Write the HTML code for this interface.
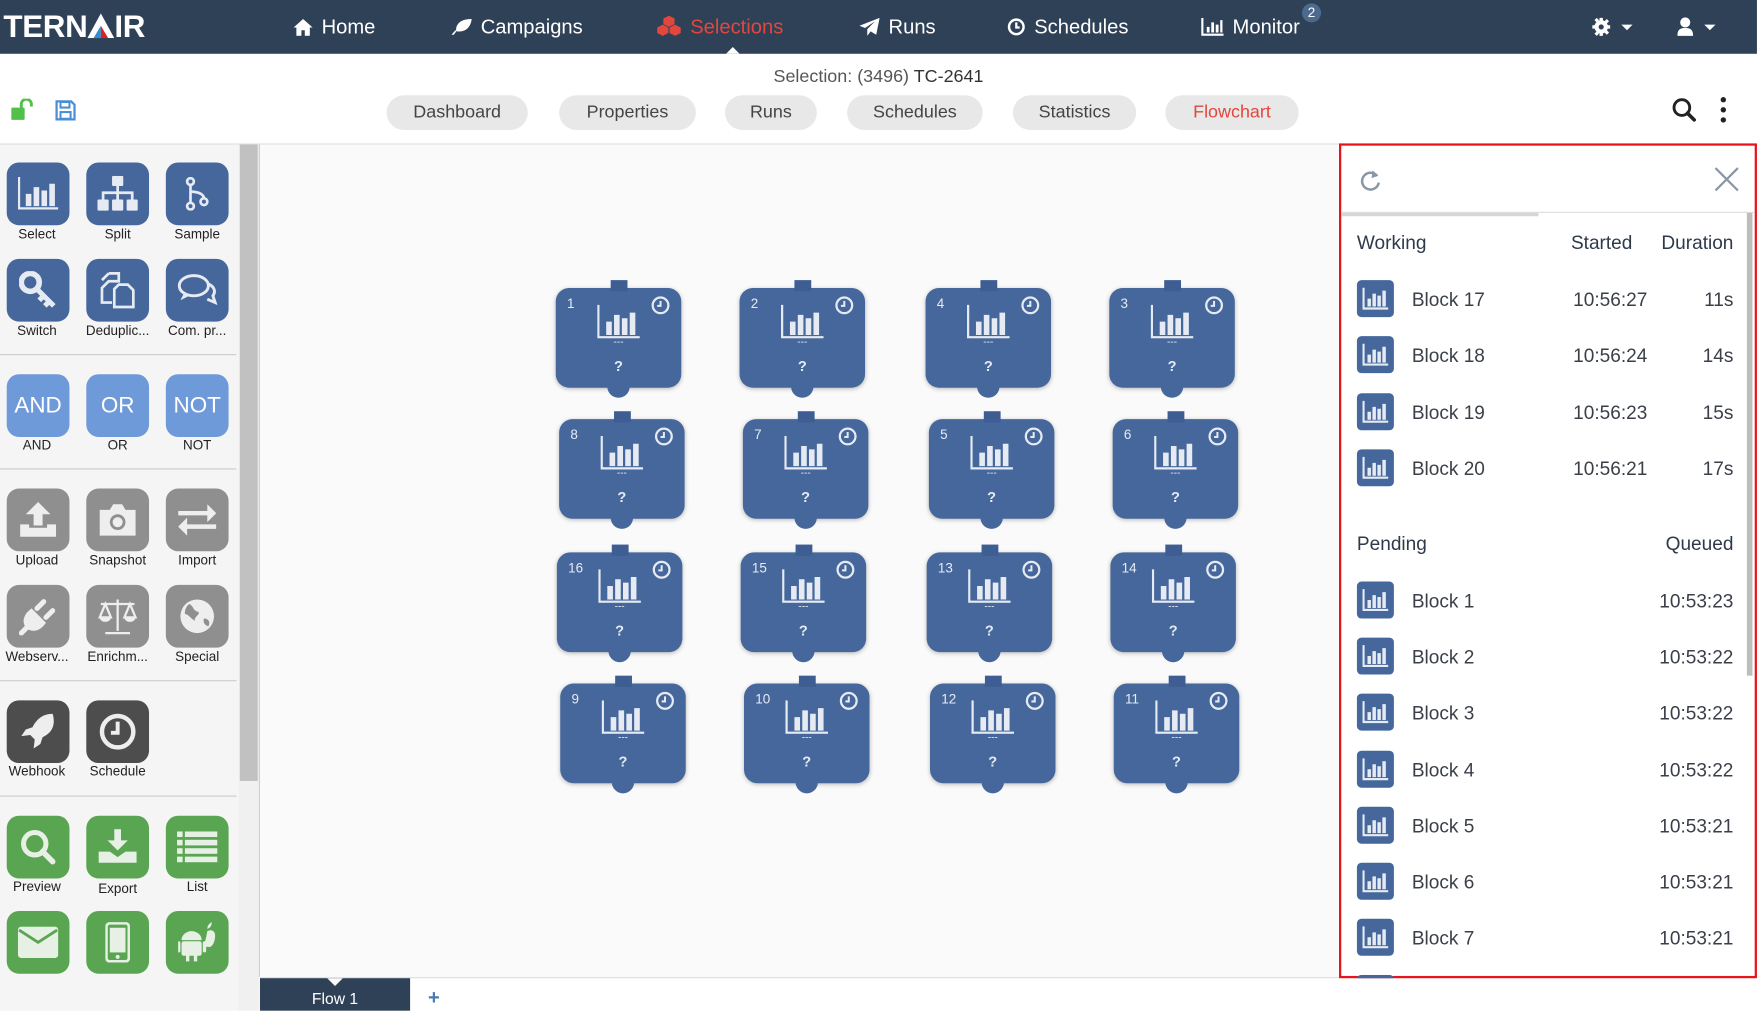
<!DOCTYPE html>
<html><head><meta charset="utf-8"><style>
*{margin:0;padding:0;box-sizing:border-box}
html,body{width:1757px;height:1010px;overflow:hidden;background:#fff}
#s{position:absolute;left:0;top:0;width:1568px;height:902px;transform:scale(1.1205);transform-origin:0 0;font-family:"Liberation Sans",sans-serif}
.a{position:absolute}
.nav{left:0;top:0;width:1568px;height:48px;background:#2f4156}
.ni{position:absolute;top:14px;font-size:18px;color:#fff;white-space:nowrap}
.ni svg{vertical-align:-2px;margin-right:8px}
.tabp{position:absolute;top:85px;height:31px;border-radius:16px;background:#e8e8e8;color:#444;font-size:16px;line-height:32px;text-align:center}
.side{left:0;top:129px;width:213px;height:773px;background:#f5f5f5}
.t{position:absolute;width:56px;height:56px;border-radius:11px;display:flex;align-items:center;justify-content:center;color:#fff}
.lb{position:absolute;width:72px;text-align:center;font-size:12px;color:#222;white-space:nowrap}
.sep{position:absolute;left:0;width:211px;height:1px;background:#ccc}
.B{background:#46679c}.L{background:#6f9ad9;font-size:20px}.G{background:#8f8f8f}.D{background:#4d4d4d}.Gr{background:#5aa552}
.blk{position:absolute;width:112px;height:89px;background:#46679c;border-radius:12px;box-shadow:0 1px 4px rgba(0,0,0,.25);color:#e6ebf3}
.blk .tb{position:absolute;left:49px;top:-7px;width:15px;height:10px;background:#3e5d92}
.blk .dt{position:absolute;left:46px;bottom:-9px;width:20px;height:20px;border-radius:50%;background:#46679c}
.blk .n{position:absolute;left:10px;top:7px;font-size:12px}
.blk .ck{position:absolute;right:10px;top:7px}
.blk .ch{position:absolute;left:37px;top:15px}
.blk .d{position:absolute;left:0;width:100%;text-align:center;top:43px;font-size:9px}
.blk .q{position:absolute;left:0;width:100%;text-align:center;top:62px;font-size:13px;font-weight:bold}
.pn{left:1195px;top:128px;width:373px;height:745px;border:2px solid #e8141c;background:#fff}
.row{position:absolute;left:14px;width:336px;height:34px;font-size:17px;color:#3a3f48}
.row .ib{position:absolute;left:0;top:0;width:33px;height:33px;border-radius:4px;background:#45679c}
.row .nm{position:absolute;left:49px;top:8px}
.row .st{position:absolute;left:193px;top:8px}
.row .du{position:absolute;right:0;top:8px}
</style></head><body><div id="s">
<div class="a nav"></div>
<div class="a" style="left:3px;top:8px;font-size:28px;font-weight:bold;color:#fff;letter-spacing:-.3px;white-space:nowrap">TERN<span style="display:inline-block;width:24px;height:22px;position:relative;vertical-align:-1px"><svg style="position:absolute;left:0;top:0" width="24" height="22" viewBox="0 0 22 24" preserveAspectRatio="none"><path d="M11 0L0 24h22z" fill="#fff"/><path d="M11 12L5 24h6z" fill="#2e8fd4"/><path d="M11 12L17 24h-6z" fill="#d8232a"/></svg></span>IR</div>
<div class="ni" style="left:262px"><svg width="17" height="15" viewBox="0 0 17 15"><path d="M8.5 0L0 7.5h2.5V15h4.5v-5h3v5h4.5V7.5H17z" fill="#fff"/></svg>Home</div>
<div class="ni" style="left:402px"><svg width="19" height="16" viewBox="0 0 19 16"><path d="M1 15C4 11 8 8 13 6 8 9 5 12 3 15zM5 10C6 3 12 1 19 1 18 8 14 13 6 12z" fill="#fff"/></svg>Campaigns</div>
<div class="ni" style="left:586px;color:#e1473c"><svg width="22" height="18" viewBox="0 0 22 18"><g fill="#e1473c"><path d="M11 0l5 2.5v5L11 10 6 7.5v-5z"/><path d="M5.5 8l5 2.5v5L5.5 18 .5 15.5v-5z"/><path d="M16.5 8l5 2.5v5L16.5 18l-5-2.5v-5z"/></g></svg>Selections</div>
<div class="a" style="left:648px;top:42px;border:6px solid transparent;border-bottom-color:#fff;border-top:0"></div>
<div class="ni" style="left:767px"><svg width="18" height="16" viewBox="0 0 18 16"><path d="M18 0L0 7l5 2 9-6-7 7v6l3-4 5 3z" fill="#fff"/></svg>Runs</div>
<div class="ni" style="left:899px"><svg width="16" height="16" viewBox="0 0 16 16"><circle cx="8" cy="8" r="6.5" fill="none" stroke="#fff" stroke-width="2.2"/><path d="M8 4v4.5h3" fill="none" stroke="#fff" stroke-width="2"/></svg>Schedules</div>
<div class="ni" style="left:1072px"><svg width="20" height="16" viewBox="0 0 20 16"><path d="M1 0v15h19" fill="none" stroke="#fff" stroke-width="2"/><path d="M5 8h2.5v5H5zM9 4h2.5v9H9zM13 6h2.5v7H13zM17 2h2v11h-2z" fill="#fff"/></svg>Monitor</div>
<div class="a" style="left:1162px;top:3px;width:17px;height:17px;border-radius:50%;background:#4c6a8e;color:#fff;font-size:12px;text-align:center;line-height:17px">2</div>
<div class="a" style="left:1421px;top:15px"><svg width="40" height="18" viewBox="0 0 40 18"><g fill="#fff"><circle cx="8" cy="9" r="6"/><path d="M6.5 1h3v3h-3zM6.5 14h3v3h-3zM0 7.5h3v3H0zM13 7.5h3v3h-3zM2 3l2-2 2 2-2 2zM11 14l2-2 2 2-2 2zM2 15l2-2 2 2-2 2zM11 4l2-2 2 2-2 2z"/><path d="M26 7h10l-5 5z"/></g><circle cx="8" cy="9" r="2.3" fill="#2f4156"/></svg></div>
<div class="a" style="left:1497px;top:15px"><svg width="36" height="18" viewBox="0 0 36 18"><g fill="#fff"><circle cx="7" cy="5" r="4.5"/><path d="M0 17c0-6 3-7 7-7s7 1 7 7z"/><path d="M24 7h10l-5 5z"/></g></svg></div>
<div class="a" style="left:0;top:60px;width:1568px;text-align:center;font-size:16px;color:#555">Selection: (3496) <span style="color:#333">TC-2641</span></div>
<div class="a" style="left:10px;top:88px"><svg width="22" height="20" viewBox="0 0 22 20"><rect x="0" y="8" width="12" height="11" rx="1" fill="#52c04a"/><path d="M9 9V5a4.5 4.5 0 019 0v2" fill="none" stroke="#52c04a" stroke-width="2.6"/></svg></div>
<div class="a" style="left:49px;top:89px"><svg width="19" height="19" viewBox="0 0 19 19"><path d="M1.5 1.5h13l3 3v13h-16z" fill="none" stroke="#4a8fd6" stroke-width="2"/><path d="M5 2h8v5H5z" fill="none" stroke="#4a8fd6" stroke-width="1.8"/><rect x="5" y="11" width="9" height="6" fill="none" stroke="#4a8fd6" stroke-width="1.8"/></svg></div>
<div class="tabp" style="left:345px;width:126px">Dashboard</div>
<div class="tabp" style="left:499px;width:122px">Properties</div>
<div class="tabp" style="left:647px;width:82px">Runs</div>
<div class="tabp" style="left:756px;width:121px">Schedules</div>
<div class="tabp" style="left:904px;width:110px">Statistics</div>
<div class="tabp" style="left:1040px;width:119px;color:#e1473c">Flowchart</div>
<div class="a" style="left:1492px;top:87px"><svg width="22" height="22" viewBox="0 0 22 22"><circle cx="9" cy="9" r="7" fill="none" stroke="#222" stroke-width="2.6"/><path d="M14 14l6 6" stroke="#222" stroke-width="3.2" stroke-linecap="round"/></svg></div>
<div class="a" style="left:1535px;top:86px"><svg width="6" height="24" viewBox="0 0 6 24"><circle cx="3" cy="3" r="2.4" fill="#222"/><circle cx="3" cy="12" r="2.4" fill="#222"/><circle cx="3" cy="21" r="2.4" fill="#222"/></svg></div>
<div class="a" style="left:0;top:128px;width:1568px;height:1px;background:#ddd"></div>
<div class="a side"></div>
<div class="a" style="left:213px;top:129px;width:18px;height:773px;background:#f0f0f0"></div>
<div class="a" style="left:214px;top:129px;width:16px;height:568px;background:#c1c1c1"></div>
<div class="a" style="left:231px;top:129px;width:1px;height:743px;background:#ccc"></div>
<div class="a" style="left:232px;top:129px;width:963px;height:743px;background:#fafafa"></div>
<div class="t B" style="left:6px;top:145px"><svg width="36" height="30" viewBox="0 0 36 30"><path d="M1 0v28h35" fill="none" stroke="#e6ebf3" stroke-width="2"/><path d="M7 15h5v11H7zM14 9h5v17h-5zM21 12h5v14h-5zM28 6h5v20h-5z" fill="#e6ebf3"/></svg></div><div class="lb" style="left:-3px;top:202px">Select</div>
<div class="t B" style="left:77px;top:145px"><svg width="36" height="32" viewBox="0 0 36 32"><g fill="#e6ebf3"><rect x="13" y="0" width="10" height="9" rx="1"/><rect x="0" y="21" width="10" height="10" rx="1"/><rect x="13" y="21" width="10" height="10" rx="1"/><rect x="26" y="21" width="10" height="10" rx="1"/></g><path d="M18 9v12M5 21v-6h26v6" fill="none" stroke="#e6ebf3" stroke-width="2.4"/></svg></div><div class="lb" style="left:69px;top:202px">Split</div>
<div class="t B" style="left:148px;top:145px"><svg width="22" height="30" viewBox="0 0 22 30"><g fill="none" stroke="#e6ebf3" stroke-width="2.4"><circle cx="5" cy="4" r="3"/><circle cx="5" cy="26" r="3"/><circle cx="17" cy="22" r="3"/><path d="M5 7v16M5 13c8 0 12 3 12 6"/></g></svg></div><div class="lb" style="left:140px;top:202px">Sample</div>
<div class="t B" style="left:6px;top:231px"><svg width="34" height="34" viewBox="0 0 34 34"><circle cx="10" cy="10" r="8" fill="none" stroke="#e6ebf3" stroke-width="5"/><path d="M15 15l16 16M22 22l-4 4M27 27l-4 4" stroke="#e6ebf3" stroke-width="4.5"/></svg></div><div class="lb" style="left:-3px;top:288px">Switch</div>
<div class="t B" style="left:77px;top:231px"><svg width="32" height="34" viewBox="0 0 32 34"><path d="M8 2h9v7h-9l-6 6v13h9M8 2L2 8v0" fill="none" stroke="#e6ebf3" stroke-width="2.4"/><path d="M17 12h8l5 5v15H13V16z" fill="none" stroke="#e6ebf3" stroke-width="2.4"/></svg></div><div class="lb" style="left:69px;top:288px">Deduplic...</div>
<div class="t B" style="left:148px;top:231px"><svg width="36" height="30" viewBox="0 0 36 30"><ellipse cx="15" cy="11" rx="13" ry="9" fill="none" stroke="#e6ebf3" stroke-width="2.6"/><path d="M6 18l-3 6 8-4" fill="#e6ebf3"/><path d="M27 9c6 2 8 7 5 11l2 6-7-3" fill="none" stroke="#e6ebf3" stroke-width="2.6"/></svg></div><div class="lb" style="left:140px;top:288px">Com. pr...</div>
<div class="sep" style="top:316px"></div>
<div class="t L" style="left:6px;top:334px">AND</div><div class="lb" style="left:-3px;top:390px">AND</div>
<div class="t L" style="left:77px;top:334px">OR</div><div class="lb" style="left:69px;top:390px">OR</div>
<div class="t L" style="left:148px;top:334px">NOT</div><div class="lb" style="left:140px;top:390px">NOT</div>
<div class="sep" style="top:418px"></div>
<div class="t G" style="left:6px;top:436px"><svg width="36" height="32" viewBox="0 0 36 32"><g fill="#eee"><path d="M18 0L7 11h7v10h8V11h7z"/><path d="M2 20h8v3h16v-3h8v11H2z"/></g></svg></div><div class="lb" style="left:-3px;top:493px">Upload</div>
<div class="t G" style="left:77px;top:436px"><svg width="36" height="30" viewBox="0 0 36 30"><path d="M2 6h9l3-5h8l3 5h9v23H2z" fill="#eee"/><circle cx="18" cy="17" r="7" fill="#8f8f8f"/><circle cx="18" cy="17" r="4.5" fill="#eee"/></svg></div><div class="lb" style="left:69px;top:493px">Snapshot</div>
<div class="t G" style="left:148px;top:436px"><svg width="34" height="28" viewBox="0 0 34 28"><g fill="#eee"><path d="M0 6h26V0l8 8-8 8v-6H0zM34 18H8v-6l-8 8 8 8v-6h26z"/></g></svg></div><div class="lb" style="left:140px;top:493px">Import</div>
<div class="t G" style="left:6px;top:522px"><svg width="34" height="34" viewBox="0 0 34 34"><path d="M2 32l8-8M8 26c-3-4-2-9 3-13l10 10c-4 5-9 6-13 3zM16 10l6-6M24 18l6-6" stroke="#eee" stroke-width="4.5" fill="#eee" stroke-linecap="round"/></svg></div><div class="lb" style="left:-3px;top:579px">Webserv...</div>
<div class="t G" style="left:77px;top:522px"><svg width="38" height="34" viewBox="0 0 38 34"><g fill="none" stroke="#eee" stroke-width="2"><path d="M19 2v28M8 32h22M4 6h30M8 6l-5 12h10zM30 6l-5 12h10z"/></g><path d="M3 18a5 4 0 0010 0zM25 18a5 4 0 0010 0z" fill="#eee"/></svg></div><div class="lb" style="left:69px;top:579px">Enrichm...</div>
<div class="t G" style="left:148px;top:522px"><svg width="32" height="32" viewBox="0 0 32 32"><circle cx="16" cy="16" r="15" fill="#eee"/><path d="M9 5c4 2 3 6 8 7 2 3-4 4-3 8-4-2-6-6-9-6 0-4 1-7 4-9zM22 18c4 0 6 3 4 7-3-1-5-3-4-7z" fill="#8f8f8f"/></svg></div><div class="lb" style="left:140px;top:579px">Special</div>
<div class="sep" style="top:607px"></div>
<div class="t D" style="left:6px;top:625px"><svg width="30" height="32" viewBox="0 0 30 32"><path d="M28 0C20 0 14 4 10 12L4 14l-4 6 8-1 4 4-1 8 6-4 2-6c8-4 12-10 9-21z" fill="#eee"/></svg></div><div class="lb" style="left:-3px;top:681px">Webhook</div>
<div class="t D" style="left:77px;top:625px"><svg width="34" height="34" viewBox="0 0 34 34"><circle cx="17" cy="17" r="14" fill="none" stroke="#eee" stroke-width="4"/><path d="M17 8v10h-6" fill="none" stroke="#eee" stroke-width="3.5"/></svg></div><div class="lb" style="left:69px;top:681px">Schedule</div>
<div class="sep" style="top:710px"></div>
<div class="t Gr" style="left:6px;top:728px"><svg width="32" height="32" viewBox="0 0 32 32"><circle cx="13" cy="13" r="10" fill="none" stroke="#e6f0e4" stroke-width="4.5"/><path d="M20 20l9 9" stroke="#e6f0e4" stroke-width="5" stroke-linecap="round"/></svg></div><div class="lb" style="left:-3px;top:784px">Preview</div>
<div class="t Gr" style="left:77px;top:728px"><svg width="34" height="32" viewBox="0 0 34 32"><g fill="#e6f0e4"><path d="M14 0h6v10h6l-9 9-9-9h6z"/><path d="M0 20h10l7 5 7-5h10v10H0z"/></g></svg></div><div class="lb" style="left:69px;top:786px">Export</div>
<div class="t Gr" style="left:148px;top:728px"><svg width="36" height="28" viewBox="0 0 36 28"><g fill="#e6f0e4"><rect x="0" y="0" width="5" height="5"/><rect x="7" y="0" width="29" height="5"/><rect x="0" y="7.5" width="5" height="5"/><rect x="7" y="7.5" width="29" height="5"/><rect x="0" y="15" width="5" height="5"/><rect x="7" y="15" width="29" height="5"/><rect x="0" y="22.5" width="5" height="5"/><rect x="7" y="22.5" width="29" height="5"/></g></svg></div><div class="lb" style="left:140px;top:784px">List</div>
<div class="t Gr" style="left:6px;top:813px"><svg width="36" height="28" viewBox="0 0 36 28"><rect x="0" y="0" width="36" height="28" rx="3" fill="#e6f0e4"/><path d="M1 3l17 11 17-11" fill="none" stroke="#5aa552" stroke-width="2.5"/></svg></div>
<div class="t Gr" style="left:77px;top:813px"><svg width="22" height="36" viewBox="0 0 22 36"><rect x="1" y="1" width="20" height="34" rx="3" fill="none" stroke="#e6f0e4" stroke-width="2.4"/><rect x="4" y="5" width="14" height="22" fill="#e6f0e4"/><circle cx="11" cy="31" r="1.8" fill="#e6f0e4"/></svg></div>
<div class="t Gr" style="left:148px;top:813px"><svg width="34" height="36" viewBox="0 0 34 36"><g fill="#e6f0e4"><path d="M3 16a9 8 0 0118 0z"/><rect x="3" y="17" width="18" height="13" rx="2"/><rect x="-1" y="17" width="3" height="10" rx="1.5"/><rect x="22" y="17" width="3" height="10" rx="1.5"/><rect x="7" y="28" width="3" height="7"/><rect x="14" y="28" width="3" height="7"/><path d="M26 8c4-2 7 0 7 4 0 6-3 11-6 10-2 0-3 0-4-1 1-4 2-7 3-13zM26 6c0-3 2-5 4-6 0 3-1 5-4 6z"/></g></svg></div>
<div class="a" style="left:232px;top:872px;width:1336px;height:1px;background:#ddd"></div>
<div class="a" style="left:232px;top:873px;width:134px;height:29px;background:#2f4156;color:#fff;font-size:14px;text-align:center;line-height:37px">Flow 1</div>
<div class="a" style="left:292px;top:873px;border:7px solid transparent;border-top-color:#fafafa;border-bottom:0"></div>
<div class="a" style="left:382px;top:880px;font-size:18px;font-weight:bold;color:#4a7bb0">+</div>
<div id="blocks"></div>
<div class="a pn">
<svg class="a" style="left:16px;top:20px" width="20" height="22" viewBox="0 0 20 22"><path d="M16 7A7.5 7.5 0 1017.5 13" fill="none" stroke="#8a96a3" stroke-width="2.2"/><path d="M12 2l5 5-6 2z" fill="#8a96a3"/></svg>
<svg class="a" style="left:333px;top:19px" width="22" height="22" viewBox="0 0 22 22"><path d="M1 1l20 20M21 1L1 21" stroke="#8a96a3" stroke-width="2"/></svg>
<div class="a" style="left:0;top:59px;width:369px;height:1px;background:#ddd"></div>
<div class="a" style="left:0;top:60px;width:176px;height:3px;background:#d6d6d6"></div>
<div class="a" style="left:362px;top:60px;width:5px;height:413px;background:#bdbdbd"></div>
<div class="a" style="left:14px;top:77px;font-size:17px;color:#2e3a4a">Working</div>
<div class="a" style="left:205px;top:77px;font-size:17px;color:#2e3a4a">Started</div>
<div class="a" style="left:274px;top:77px;width:76px;text-align:right;font-size:17px;color:#2e3a4a">Duration</div>
<div class="a" style="left:14px;top:346px;font-size:17px;color:#2e3a4a">Pending</div>
<div class="a" style="left:250px;top:346px;width:100px;text-align:right;font-size:17px;color:#2e3a4a">Queued</div>
<div id="rows"></div>
</div>
</div>
<script>
var ic='<svg style="position:absolute;left:5px;top:6px" width="23" height="21" viewBox="0 0 26 22"><path d="M1 0v21h25" fill="none" stroke="#e6ebf3" stroke-width="2.2"/><path d="M5 11h3.5v8H5zM10 6h3.5v13H10zM15 8h3.5v11H15zM20 3h3.5v16H20z" fill="#e6ebf3"/></svg>';
var R=document.getElementById('rows'),h='';
var w=[['Block 17','10:56:27','11s'],['Block 18','10:56:24','14s'],['Block 19','10:56:23','15s'],['Block 20','10:56:21','17s']];
w.forEach(function(r,i){h+='<div class="row" style="top:'+(120+i*50.3)+'px"><div class="ib">'+ic+'</div><span class="nm">'+r[0]+'</span><span class="st">'+r[1]+'</span><span class="du">'+r[2]+'</span></div>'});
var p=['10:53:23','10:53:22','10:53:22','10:53:22','10:53:21','10:53:21','10:53:21'];
p.forEach(function(t,i){h+='<div class="row" style="top:'+(389+i*50.2)+'px"><div class="ib">'+ic+'</div><span class="nm">Block '+(i+1)+'</span><span class="du">'+t+'</span></div>'});
h+='<div class="row" style="top:740px;height:3px;overflow:hidden"><div class="ib"></div></div>';
R.innerHTML=h;
var B=document.getElementById('blocks'),g='';
var rows=[[257,[496,660,826,990],[1,2,4,3]],[374,[499,663,829,993],[8,7,5,6]],[493,[497,661,827,991],[16,15,13,14]],[610,[500,664,830,994],[9,10,12,11]]];
var ch='<svg class="ch" width="38" height="30" viewBox="0 0 38 30"><path d="M1 0v29h37" fill="none" stroke="#e6ebf3" stroke-width="2"/><path d="M8 15h5v12H8zM15 9h5v18h-5zM22 12h5v15h-5zM29 7h5v20h-5z" fill="#e6ebf3"/></svg>';
var ck='<svg class="ck" width="17" height="17" viewBox="0 0 17 17"><circle cx="8.5" cy="8.5" r="7" fill="none" stroke="#e6ebf3" stroke-width="2"/><path d="M8.5 4.5v4.5H5.5" fill="none" stroke="#e6ebf3" stroke-width="1.8"/></svg>';
rows.forEach(function(r){r[1].forEach(function(x,i){g+='<div class="blk" style="left:'+x+'px;top:'+r[0]+'px"><i class="tb"></i><span class="n">'+r[2][i]+'</span>'+ck+ch+'<span class="d">---</span><span class="q">?</span><i class="dt"></i></div>'})});
B.innerHTML=g;
</script>
</body></html>
